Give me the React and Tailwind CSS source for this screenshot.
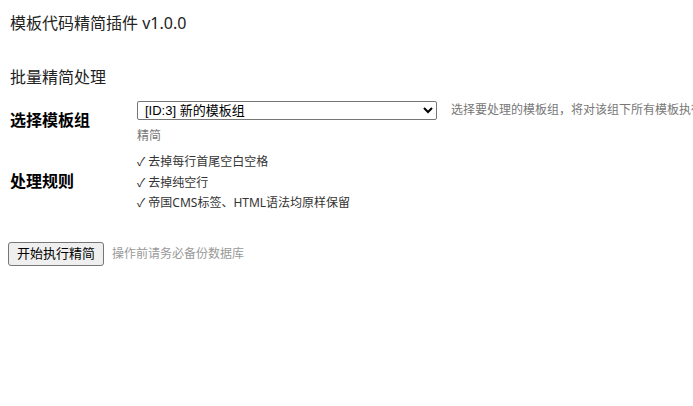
export default function App() {
  const rules = ['去掉每行首尾空白空格', '去掉纯空行', '帝国CMS标签、HTML语法均原样保留']

  return (
    <div
      className="min-h-screen overflow-hidden bg-white px-2 text-[#222]"
      style={{ fontFamily: '"Noto Sans", "Noto Sans CJK SC", sans-serif' }}
    >
      <div className="pt-[11px] pl-[2px] text-base leading-6">模板代码精简插件 v1.0.0</div>

      <div className="mt-[30px] pl-[2px] text-base leading-6">批量精简处理</div>

      <div className="mt-[9px] grid w-[699px] grid-cols-[129px_570px] gap-y-[3px]">
        <div className="flex items-center pb-[7px] pl-[2px] text-base font-bold text-black">选择模板组</div>
        <div className="-mt-px text-xs leading-[26px] text-[#777]">
          <select
            className="mr-[14px] inline-block h-[19px] w-[300px] rounded-[2px] border border-[#767676] bg-white pl-[3px] align-middle text-[13px] leading-none text-black"
            style={{ fontFamily: '"Liberation Sans", "Noto Sans CJK SC", sans-serif' }}
            defaultValue="3"
          >
            <option value="3">[ID:3] 新的模板组</option>
          </select>
          选择要处理的模板组，将对该组下所有模板执行精简
        </div>

        <div className="flex items-center pb-[3px] pl-[2px] text-base font-bold text-black">处理规则</div>
        <ul className="text-xs leading-[20.5px] text-[#333]">
          {rules.map((r) => (
            <li key={r}>✓ {r}</li>
          ))}
        </ul>
      </div>

      <div className="mt-[28px] flex items-center">
        <button className="h-[24px] rounded-[3px] border border-[#767676] bg-[#efefef] px-[8px] text-[13px] leading-none text-black">
          开始执行精简
        </button>
        <span className="ml-2 text-xs text-[#999]">操作前请务必备份数据库</span>
      </div>
    </div>
  )
}
